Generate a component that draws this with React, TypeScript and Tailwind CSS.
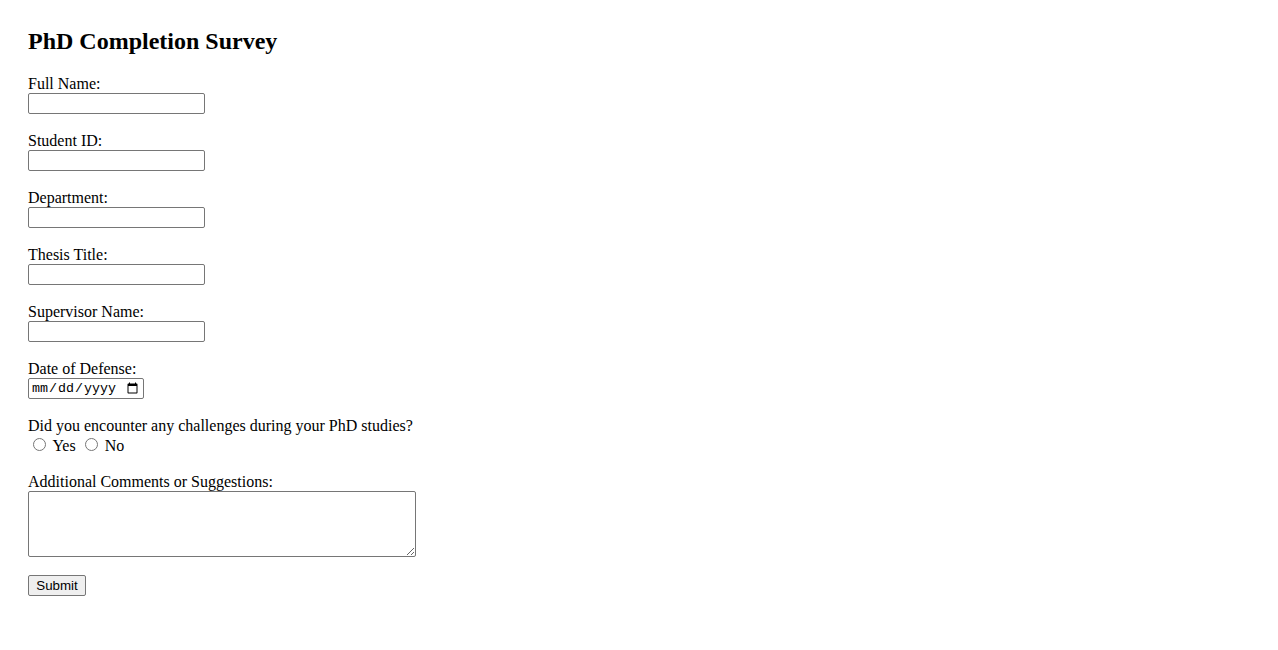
import React from 'react';

const fields = [
  { id: 'fullName', label: 'Full Name:' },
  { id: 'studentId', label: 'Student ID:' },
  { id: 'department', label: 'Department:' },
  { id: 'thesisTitle', label: 'Thesis Title:' },
  { id: 'supervisor', label: 'Supervisor Name:' },
];

const inputCls =
  "block w-[177px] h-[21px] px-[2px] py-[1px] bg-white border border-[#767676] rounded-[2px] text-[13.33px] font-['Liberation_Sans',Arial,sans-serif]";

const App: React.FC = () => {
  return (
    <div className="min-h-screen bg-white text-black px-[28px] pt-[28px] font-['Liberation_Serif','Times_New_Roman',serif] text-[16px]">
      <h2 className="text-[24px] font-bold leading-[27px] mb-[20px]">PhD Completion Survey</h2>

      <form onSubmit={(e) => e.preventDefault()}>
        {fields.map((f) => (
          <div key={f.id} className="mb-[18px]">
            <label htmlFor={f.id} className="block leading-[18px]">{f.label}</label>
            <input type="text" id={f.id} name={f.id} className={inputCls} />
          </div>
        ))}

        <div className="mb-[18px]">
          <label htmlFor="defenseDate" className="block leading-[18px]">Date of Defense:</label>
          <input
            type="date"
            id="defenseDate"
            className="block w-[116px] h-[21px] px-[2px] py-[1px] bg-white border border-[#767676] rounded-[2px] text-[13.33px] font-['Liberation_Mono',monospace]"
          />
        </div>

        <div className="mb-[18px]">
          <p className="leading-[18px]">Did you encounter any challenges during your PhD studies?</p>
          <div className="h-[20px] leading-[20px]">
            <input type="radio" id="yes" name="challenges" value="yes" className="w-[13px] h-[13px] ml-[5px] mr-[3px] mt-[3px] align-baseline" />{' '}
            <label htmlFor="yes">Yes</label>{' '}
            <input type="radio" id="no" name="challenges" value="no" className="w-[13px] h-[13px] ml-[5px] mr-[3px] mt-[3px] align-baseline" />{' '}
            <label htmlFor="no">No</label>
          </div>
        </div>

        <div className="mb-[18px]">
          <label htmlFor="comments" className="block leading-[18px]">Additional Comments or Suggestions:</label>
          <textarea
            id="comments"
            rows={4}
            cols={50}
            className="block w-[388px] h-[66px] px-[2px] py-[2px] bg-white border border-[#767676] rounded-[2px] text-[13.33px] font-['Liberation_Mono',monospace]"
          />
        </div>

        <button
          type="submit"
          className="block w-[58px] h-[21px] px-[6px] bg-[#efefef] border border-[#767676] rounded-[2px] text-[13.33px] leading-[15px] font-['Liberation_Sans',Arial,sans-serif]"
        >
          Submit
        </button>
      </form>
    </div>
  );
};

export default App;
